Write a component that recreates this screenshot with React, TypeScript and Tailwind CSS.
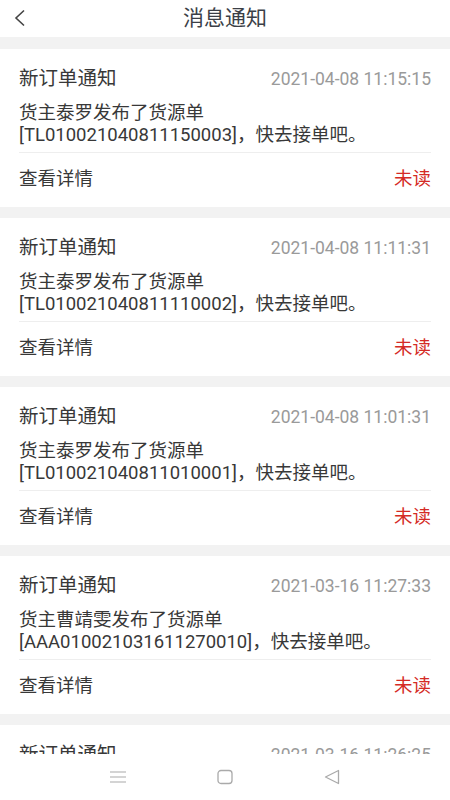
import { ReactElement } from "react";

type Notice = {
  title: string;
  time: string;
  owner: string;
  orderNo: string;
};

const notices: Notice[] = [
  { title: "新订单通知", time: "2021-04-08 11:15:15", owner: "泰罗", orderNo: "TL010021040811150003" },
  { title: "新订单通知", time: "2021-04-08 11:11:31", owner: "泰罗", orderNo: "TL010021040811110002" },
  { title: "新订单通知", time: "2021-04-08 11:01:31", owner: "泰罗", orderNo: "TL010021040811010001" },
  { title: "新订单通知", time: "2021-03-16 11:27:33", owner: "曹靖雯", orderNo: "AAA010021031611270010" },
  { title: "新订单通知", time: "2021-03-16 11:26:25", owner: "曹靖雯", orderNo: "AAA010021031611260009" },
];

function NoticeCard({ item }: { item: Notice }): ReactElement {
  return (
    <div className="bg-white px-[19px] pt-[17px] shrink-0">
      <div className="flex items-center justify-between h-[26px]">
        <span className="text-[19.5px] text-[#383838]">{item.title}</span>
        <span className="text-[17.5px] text-[#9a9a9a]">{item.time}</span>
      </div>
      <div className="mt-[10px] text-[18.5px] leading-[22px] text-[#383838]">
        货主{item.owner}发布了货源单
        <br />[{item.orderNo}]，快去接单吧。
      </div>
      <div className="mt-[6px] h-px bg-[#eeeeee]" />
      <div className="flex items-center justify-between h-[54px]">
        <span className="text-[18.5px] text-[#383838]">查看详情</span>
        <span className="text-[18.5px] text-[#d42a25]">未读</span>
      </div>
    </div>
  );
}

export default function App(): ReactElement {
  return (
    <div
      className="w-[450px] h-[800px] flex flex-col overflow-hidden bg-[#f2f2f2]"
      style={{ fontFamily: 'Roboto, "Noto Sans CJK SC", sans-serif' }}
    >
      <div className="relative h-[37px] shrink-0 bg-white flex items-center justify-center">
        <svg
          className="absolute left-[13px] top-[9px]"
          width="14"
          height="18"
          viewBox="0 0 14 18"
          fill="none"
          stroke="#444"
          strokeWidth="1.6"
        >
          <path d="M11 1.5 L3 9 L11 16.5" />
        </svg>
        <span className="text-[21px] text-[#3b3f47]">消息通知</span>
      </div>

      <div className="flex-1 overflow-hidden flex flex-col gap-[11px] pt-[12px]">
        {notices.map((n, i) => (
          <NoticeCard key={i} item={n} />
        ))}
      </div>

      <div className="h-[46px] shrink-0 bg-white flex items-center justify-center gap-[91px]">
        <svg width="16" height="14" viewBox="0 0 16 14" stroke="#aaa" strokeWidth="1.2">
          <path d="M0 2 H16 M0 7 H16 M0 12 H16" />
        </svg>
        <svg width="16" height="16" viewBox="0 0 16 16" fill="none" stroke="#aaa" strokeWidth="1.3">
          <rect x="1" y="1.5" width="14" height="13" rx="3" />
        </svg>
        <svg width="16" height="16" viewBox="0 0 16 16" fill="none" stroke="#aaa" strokeWidth="1.3">
          <path d="M14.5 1.5 V14.5 L1.5 8 Z" strokeLinejoin="round" />
        </svg>
      </div>
    </div>
  );
}
